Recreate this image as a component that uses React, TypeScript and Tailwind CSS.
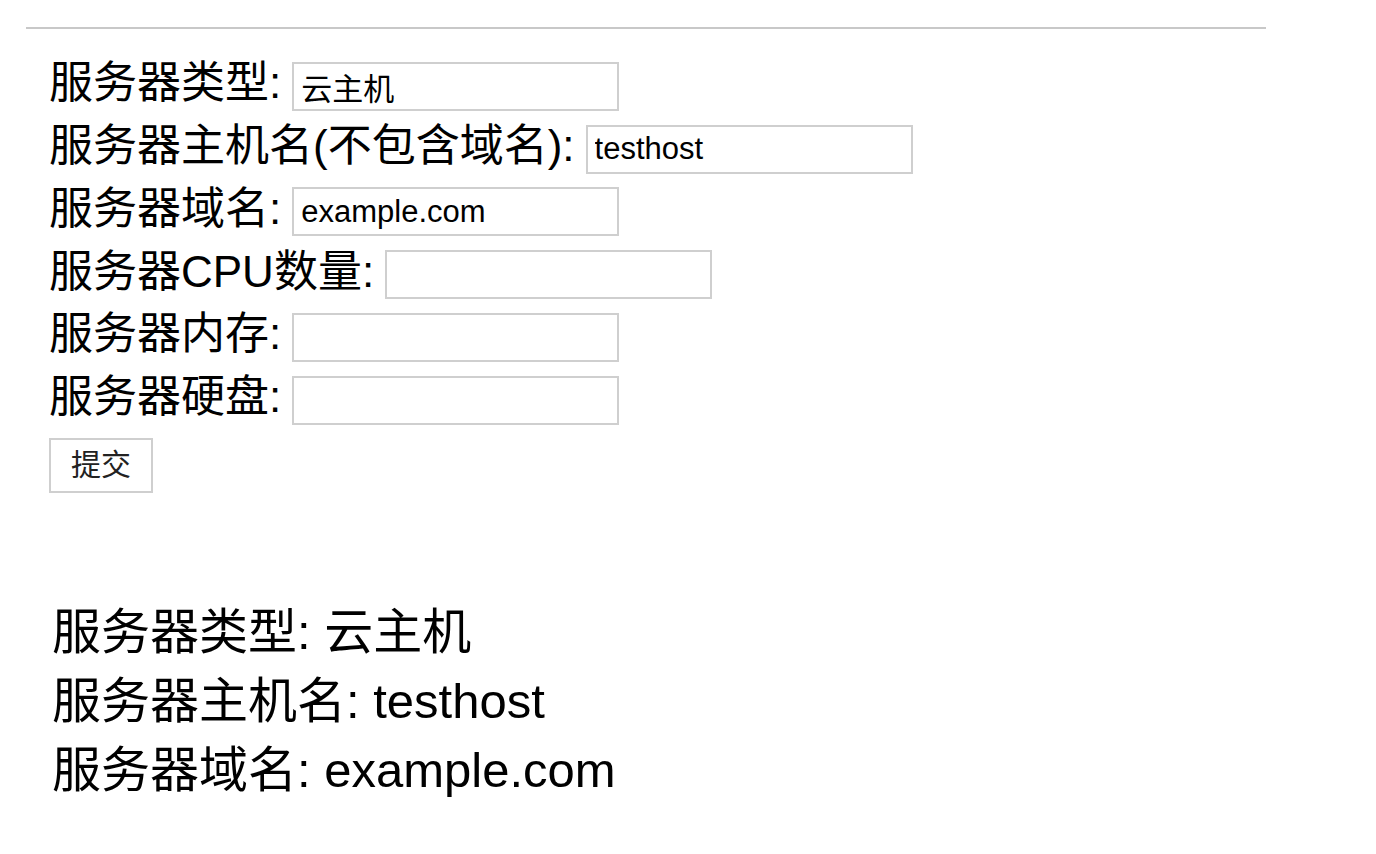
import React from "react";

const font = { fontFamily: '"Liberation Sans", "Noto Sans CJK SC", sans-serif' };

function Row({ label, value }: { label: React.ReactNode; value?: string }) {
  return (
    <div className="flex h-[62.75px] items-center">
      <span className="pb-[6px] text-[44px] leading-none text-black whitespace-nowrap">{label}</span>
      <input
        readOnly
        defaultValue={value ?? ""}
        className="ml-[11px] h-[49px] w-[327px] border-2 border-[#cfcfcf] bg-white px-[7px] text-[31px] leading-none text-black outline-none"
        style={font}
      />
    </div>
  );
}

export default function App() {
  return (
    <div className="h-[854px] w-[1376px] bg-white" style={font}>
      <div className="pl-[26px] pt-[27px]">
        <div className="h-[2px] w-[1240px] bg-[#c8c8c8]" />
      </div>
      <form className="mt-[26px] pl-[49px]" onSubmit={(e) => e.preventDefault()}>
        <Row label="服务器类型:" value="云主机" />
        <Row label="服务器主机名(不包含域名):" value="testhost" />
        <Row label="服务器域名:" value="example.com" />
        <Row label="服务器CPU数量:" />
        <Row label="服务器内存:" />
        <Row label="服务器硬盘:" />
        <button
          type="submit"
          className="mt-[6px] flex h-[55px] w-[104px] items-center justify-center border-2 border-[#cfcfcf] bg-white text-[30px] leading-none text-[#222]"
          style={font}
        >
          提交
        </button>
      </form>
      <div className="mt-[105px] pl-[52px] text-[49px] leading-[69px] text-black">
        <div>服务器类型: 云主机</div>
        <div>服务器主机名: testhost</div>
        <div>服务器域名: example.com</div>
      </div>
    </div>
  );
}
